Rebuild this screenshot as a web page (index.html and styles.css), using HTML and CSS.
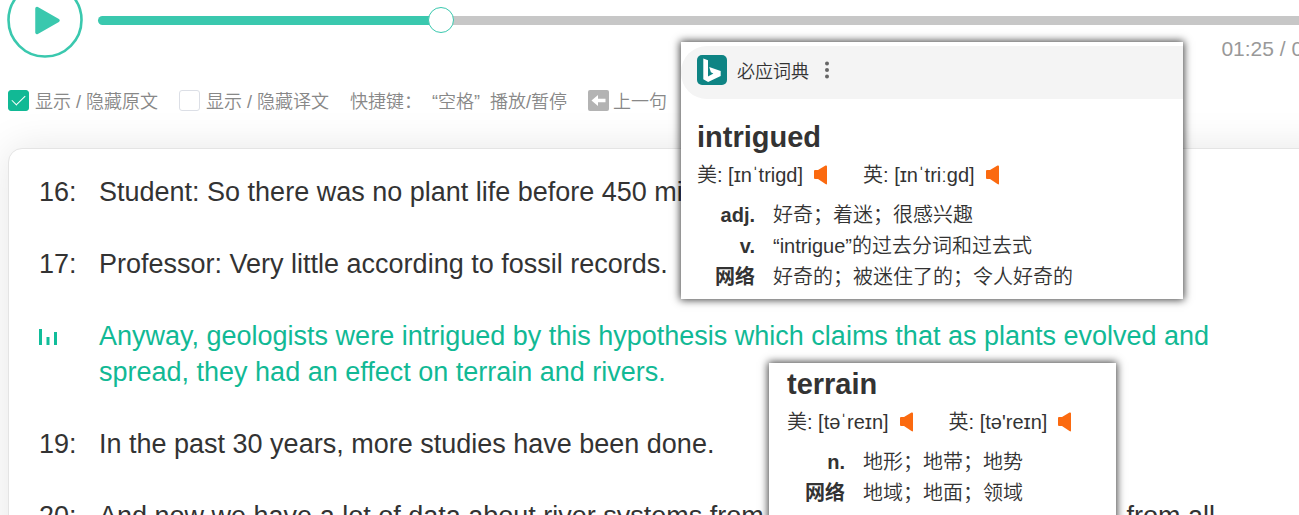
FILE: index.html
```html
<!DOCTYPE html>
<html lang="zh-CN">
<head>
<meta charset="utf-8">
<title>听力精听</title>
<link rel="stylesheet" href="styles.css">
</head>
<body>
<main class="page">
  <section class="player">
    <button class="play" aria-label="播放">
      <svg viewBox="0 0 76 76" width="76" height="76"><circle cx="38" cy="38" r="36.5" fill="#fff" stroke="#3ac8ae" stroke-width="2.6"/><path d="M30 26.500L51 38.500L30 50.500Z" fill="#3ac8ae" stroke="#3ac8ae" stroke-width="3.500" stroke-linejoin="round"/></svg>
    </button>
    <div class="timeline">
      <input class="seek" type="range" min="0" max="314" value="85" aria-label="播放进度" style="--played: 27.5%">
      <div class="time">01:25 / 05:14</div>
    </div>
  </section>

  <section class="tools">
    <label class="toggle"><input type="checkbox" class="box" checked>显示 / 隐藏原文</label>
    <label class="toggle"><input type="checkbox" class="box">显示 / 隐藏译文</label>
    <span class="keys">快捷键：</span>
    <span class="space">“空格”</span>
    <span class="pause">播放/暂停</span>
    <span class="prev"><svg viewBox="0 0 21 21" width="21" height="21"><rect width="21" height="21" rx="2" fill="#b3b3b3"/><path d="M3.500 10.500L10 5V8.800H17.500V12.200H10V16Z" fill="#fff"/></svg>上一句</span>
  </section>

  <section class="transcript">
    <div class="line"><span class="num">16:</span><p>Student: So there was no plant life before 450 million years ago?</p></div>
    <div class="line"><span class="num">17:</span><p>Professor: Very little according to fossil records.</p></div>
    <div class="line current"><span class="num"><svg viewBox="0 0 18 16" width="18" height="16"><path d="M0 0H3V16H0ZM7.500 8H10.500V16H7.500ZM15 3H18V16H15Z" fill="#11bd9a"/></svg></span><p>Anyway, geologists were intrigued by this hypothesis which claims that as plants evolved and spread, they had an effect on terrain and rivers.</p></div>
    <div class="line"><span class="num">19:</span><p>In the past 30 years, more studies have been done.</p></div>
    <div class="line"><span class="num">20:</span><p>And now we have a lot of data about river systems from different periods and phases, from all</p></div>
  </section>

  <aside class="popup popup-intrigued">
    <header class="brand">
      <svg viewBox="0 0 30 30" width="30" height="30"><rect width="30" height="30" rx="5" fill="#0e8484"/><path d="M6.300 3.500L11 5.200V21.600L16.400 18.600L13.900 17.300L12.200 12L23.700 16V21L11.100 27L6.300 24.200Z" fill="#fff"/></svg>
      <span>必应词典</span>
      <button class="more" aria-label="更多"><svg viewBox="0 0 4 18" width="4" height="18" fill="#666"><circle cx="2" cy="2.500" r="2"/><circle cx="2" cy="9" r="2"/><circle cx="2" cy="15.500" r="2"/></svg></button>
    </header>
    <div class="entry">
      <h2>intrigued</h2>
      <div class="phonetics">
        <span class="sound">美: [ɪnˈtrigd]<button aria-label="美音"><svg viewBox="0 0 14 20" width="14" height="20"><path d="M1 5H4L11.500 .5Q13 0 13 1.500V18.500Q13 20 11.500 19L4 14H1Q0 14 0 13V6Q0 5 1 5Z" fill="#fb6a10"/></svg></button></span>
        <span class="sound">英: [ɪnˈtriːgd]<button aria-label="英音"><svg viewBox="0 0 14 20" width="14" height="20"><path d="M1 5H4L11.500 .5Q13 0 13 1.500V18.500Q13 20 11.500 19L4 14H1Q0 14 0 13V6Q0 5 1 5Z" fill="#fb6a10"/></svg></button></span>
      </div>
      <dl>
        <dt>adj.</dt><dd>好奇；着迷；很感兴趣</dd>
        <dt>v.</dt><dd>“intrigue”的过去分词和过去式</dd>
        <dt>网络</dt><dd>好奇的；被迷住了的；令人好奇的</dd>
      </dl>
    </div>
  </aside>

  <aside class="popup popup-terrain">
    <div class="entry">
      <h2>terrain</h2>
      <div class="phonetics">
        <span class="sound">美: [təˈreɪn]<button aria-label="美音"><svg viewBox="0 0 14 20" width="14" height="20"><path d="M1 5H4L11.500 .5Q13 0 13 1.500V18.500Q13 20 11.500 19L4 14H1Q0 14 0 13V6Q0 5 1 5Z" fill="#fb6a10"/></svg></button></span>
        <span class="sound">英: [tə'reɪn]<button aria-label="英音"><svg viewBox="0 0 14 20" width="14" height="20"><path d="M1 5H4L11.500 .5Q13 0 13 1.500V18.500Q13 20 11.500 19L4 14H1Q0 14 0 13V6Q0 5 1 5Z" fill="#fb6a10"/></svg></button></span>
      </div>
      <dl>
        <dt>n.</dt><dd>地形；地带；地势</dd>
        <dt>网络</dt><dd>地域；地面；领域</dd>
      </dl>
    </div>
  </aside>
</main>
</body>
</html>
```

FILE: styles.css
```css
* { box-sizing: border-box; }
html { height: 100%; overflow: hidden; }
body {
  height: 100%;
  margin: 0;
  overflow: hidden;
  background: #fff;
  color: #333;
  font-family: "Liberation Sans", "Noto Sans CJK SC", sans-serif;
}
button { padding: 0; border: 0; background: none; display: flex; }
svg { display: block; flex: none; }

.page {
  position: relative;
  margin-right: -45px;
}
.player {
  display: flex;
  gap: 15px;
  padding-left: 7px;
  margin-top: -18px;
}
.timeline {
  flex: 1;
  padding-top: 25px;
}
.seek {
  appearance: none;
  display: block;
  width: 100%;
  height: 26px;
  margin: 0;
  background: none;
}
.seek::-webkit-slider-runnable-track {
  height: 9px;
  border-radius: 5px;
  background: linear-gradient(to right, #3ac8ae var(--played), #c7c7c7 var(--played));
}
.seek::-webkit-slider-thumb {
  appearance: none;
  width: 26px;
  height: 26px;
  margin-top: -9px;
  border: 1px solid #3ac8ae;
  border-radius: 50%;
  background: #fff;
}
.time {
  margin-top: 4px;
  text-align: right;
  color: #999;
  font-size: 21px;
  line-height: 24px;
}

.tools {
  display: flex;
  align-items: center;
  height: 24px;
  margin-top: 27px;
  padding-left: 8px;
  color: #888;
  font-size: 18px;
  font-weight: 350;
  white-space: nowrap;
}
.toggle { display: flex; align-items: center; gap: 6px; margin-right: 21px; }
.box {
  appearance: none;
  display: grid;
  place-items: center;
  width: 21px;
  height: 21px;
  margin: 0;
  border: 1px solid #dcdfe6;
  border-radius: 3px;
  background: #fff;
}
.box:checked { background: #11b995; border-color: #11b995; }
.box:checked::before {
  content: "";
  width: 12px;
  height: 6px;
  margin-bottom: 4px;
  border: solid #fff;
  border-width: 0 0 1px 1px;
  rotate: -45deg;
}
.space { margin-left: 10px; }
.pause { margin-left: 10px; }
.prev { display: flex; align-items: center; gap: 4px; margin-left: 21px; }

.transcript {
  display: flex;
  flex-direction: column;
  gap: 36px;
  margin: 36px 0 0 8px;
  padding: 25px 60px 36px 30px;
  border: 1px solid #e4e4e4;
  border-radius: 14px;
  box-shadow: 0 0 40px rgba(0, 0, 0, .1);
  background: #fff;
  font-size: 27px;
  line-height: 36px;
}
.line { display: flex; }
.line p { margin: 0; }
.num { flex: none; width: 60px; }
.num svg { margin-top: 11px; }
.current { color: #11b995; }

.popup {
  position: absolute;
  background: #fff;
  box-shadow: 0 0 8px 1px rgba(0, 0, 0, .75);
}
.popup-intrigued { left: 681px; top: 60px; width: 502px; padding: 4px 0 6px; }
.popup-terrain { left: 769px; top: 381px; width: 347px; padding: 4px 0 30px; }
.brand {
  display: flex;
  align-items: center;
  gap: 10px;
  height: 53px;
  padding: 0 0 5px 16px;
  margin-bottom: 21px;
  border-radius: 26px 0 0 26px;
  background: #f4f4f4;
  font-size: 18px;
  font-weight: 350;
}
.more { margin-left: 6px; }
.entry { padding: 0 16px; }
.popup-terrain .entry { padding-left: 18px; }
h2 { margin: 0; font-size: 29px; line-height: 34px; }
.phonetics {
  display: flex;
  gap: 35px;
  margin: 6px 0 10px;
  font-size: 20px;
  font-weight: 350;
  line-height: 30px;
}
.sound { display: flex; align-items: center; gap: 11px; white-space: nowrap; }
dl {
  display: grid;
  grid-template-columns: 58px 1fr;
  column-gap: 18px;
  margin: 0;
  font-size: 20px;
  line-height: 31px;
}
dt { text-align: right; font-weight: 700; }
dd { margin: 0; font-weight: 350; white-space: nowrap; }
```
